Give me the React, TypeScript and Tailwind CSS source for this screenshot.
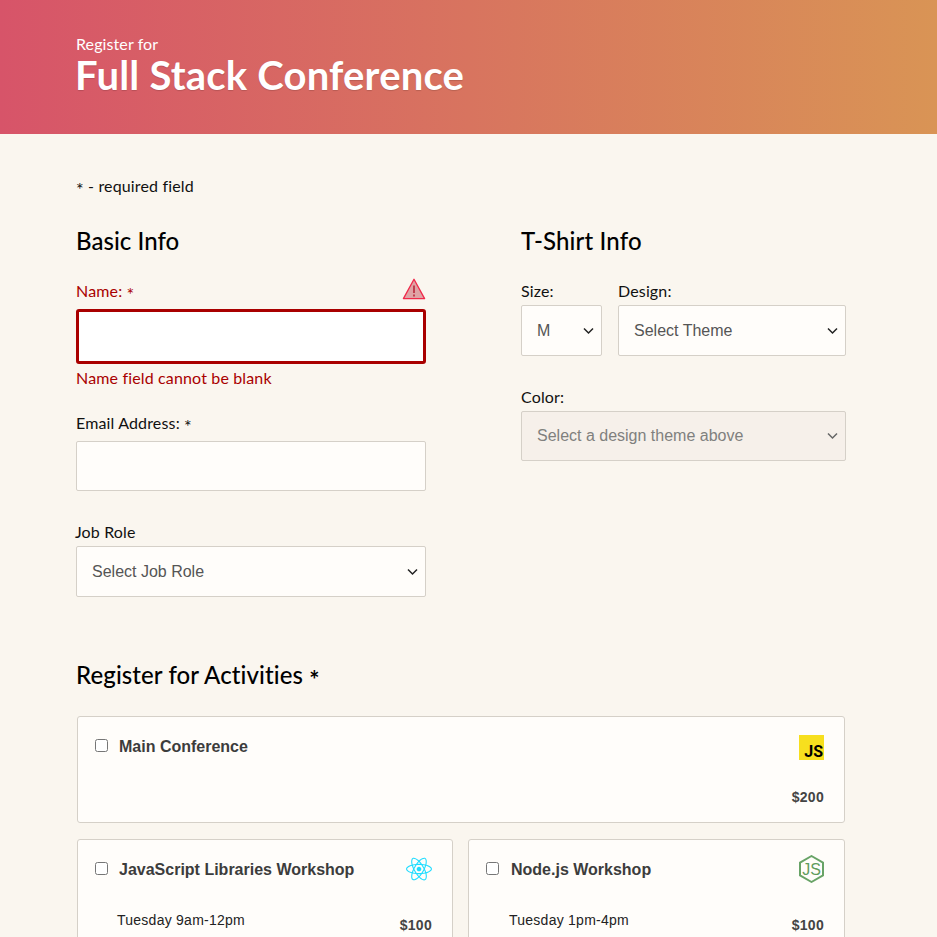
import React from "react";
import { FaReact } from "react-icons/fa";

const nunito = "font-['Lato','Noto_Sans',sans-serif]";

function Chevron({ muted }: { muted?: boolean }) {
  return (
    <svg
      className="absolute right-[8px] top-1/2 -translate-y-1/2 pointer-events-none"
      width="11"
      height="7"
      viewBox="0 0 11 7"
      fill="none"
      stroke={muted ? "#666" : "#222"}
      strokeWidth="1.5"
    >
      <path d="M1 1l4.5 4.5L10 1" />
    </svg>
  );
}

function Select({
  value,
  className,
  disabled,
}: {
  value: string;
  className: string;
  disabled?: boolean;
}) {
  return (
    <div className={`relative ${className}`}>
      <select
        disabled={disabled}
        className={`appearance-none opacity-100 w-full h-full border border-[#d5d0c8] rounded-[2px] pl-[15px] pr-6 text-[16px] font-['Liberation_Sans',sans-serif] ${
          disabled ? "bg-[#f6f0ea] text-[#80807e]" : "bg-[#fffdfa] text-[#555]"
        }`}
      >
        <option>{value}</option>
      </select>
      <Chevron muted={disabled} />
    </div>
  );
}

function Warning() {
  return (
    <svg width="24" height="24" viewBox="0 0 24 24" className="block">
      <path d="M12 2.2L22.6 21.6H1.4Z" fill="#dfa3a5" stroke="#f0294a" strokeWidth="1.3" strokeLinejoin="round" />
      <path d="M12 8.5v7.6" stroke="#b3152a" strokeWidth="1.4" />
      <path d="M12 17.6v1.8" stroke="#b3152a" strokeWidth="1.4" />
    </svg>
  );
}

function NodeIcon() {
  return (
    <svg width="25" height="28" viewBox="0 0 25 28" className="block -translate-y-px">
      <path d="M12.5 1L24 7.6V20.4L12.5 27L1 20.4V7.6Z" fill="none" stroke="#68a366" strokeWidth="2" strokeLinejoin="round" />
      <text x="12.5" y="19.5" textAnchor="middle" fontFamily="Liberation Sans, sans-serif" fontSize="16" fill="#5f9c5d">
        JS
      </text>
    </svg>
  );
}

function Star() {
  return <span className="inline-block translate-y-[4px] text-[18px] leading-none">*</span>;
}

function ActivityCard({
  title,
  time,
  price,
  icon,
  className,
  titleClass,
  timeClass,
}: {
  title: string;
  time: string;
  price: string;
  icon: React.ReactNode;
  className?: string;
  titleClass: string;
  timeClass: string;
}) {
  return (
    <div className={`h-[130px] bg-[#fffdfa] border border-[#d5d0c8] rounded-[3px] pl-[17px] pr-[20px] pt-[14px] ${className ?? ""}`}>
      <div className="flex items-center justify-between h-[32px]">
        <label className="flex items-center">
          <input type="checkbox" className="w-[13px] h-[13px] m-0 -translate-y-[2px]" />
          <span className={`${titleClass} text-[16px] font-bold text-[#3c3c3c]`}>{title}</span>
        </label>
        {icon}
      </div>
      <div className={`flex justify-between mt-[22px] ${timeClass}`}>
        <span className="text-[14px] text-[#222] leading-[24px] tracking-[0.25px]">{time}</span>
        <span className="text-[14px] font-bold text-[#444] leading-[24px] mt-[5px] tracking-[0.3px]">{price}</span>
      </div>
    </div>
  );
}

const labelText = "text-[16px] leading-[20px] tracking-[0.15px]";

export default function App() {
  return (
    <div className="h-[937px] overflow-hidden bg-[#faf6ef] font-['Liberation_Sans',sans-serif]">
      <header className="h-[134px] bg-linear-to-r/srgb from-[#d75469] to-[#d99455] pl-[76px] pt-[35px] text-white">
        <p className={`${nunito} text-[16px] leading-[18px] tracking-[0.1px]`}>Register for</p>
        <h1 className={`${nunito} -ml-px text-[40px] leading-[44px] font-bold tracking-[0.2px] [text-shadow:0_1px_1px_rgba(0,0,0,0.15)]`}>
          Full Stack Conference
        </h1>
      </header>

      <main className={`px-[76px] w-[922px] ${nunito}`}>
        <p className={`mt-[42px] ${labelText} text-[#111]`}>
          <Star /> - required field
        </p>

        <div className="flex justify-between mt-[30px]">
          <section className="w-[350px]">
            <h2 className="text-[24px] leading-[30px] font-medium text-black tracking-[0.05px]">Basic Info</h2>

            <div className="flex justify-between items-start mt-[21px] h-[24px] text-[#a90000]">
              <label className={`mt-[4px] ${labelText}`}>
                Name: <Star />
              </label>
              <Warning />
            </div>
            <input className="block mt-[8px] w-full h-[55px] bg-white border-[3px] border-[#a90000] rounded-[3px]" />
            <p className={`mt-[4px] ${labelText} text-[#a90000]`}>Name field cannot be blank</p>

            <label className={`block mt-[25px] ${labelText} text-[#111]`}>
              Email Address: <Star />
            </label>
            <input className="block mt-[8px] w-full h-[50px] bg-[#fffdfa] border border-[#d5d0c8] rounded-[2px]" />

            <label className={`block mt-[31px] -ml-px ${labelText} text-[#111]`}>Job Role</label>
            <Select value="Select Job Role" className="mt-[4px] h-[51px]" />
          </section>

          <section className="w-[325px]">
            <h2 className="text-[24px] leading-[30px] font-medium text-black tracking-[0.15px]">T-Shirt Info</h2>
            <div className="flex gap-[16px] mt-[25px]">
              <div className="w-[81px]">
                <label className={`block ${labelText} text-[#111]`}>Size:</label>
                <Select value="M" className="mt-[4px] h-[51px]" />
              </div>
              <div className="flex-1">
                <label className={`block ${labelText} text-[#111]`}>Design:</label>
                <Select value="Select Theme" className="mt-[4px] h-[51px]" />
              </div>
            </div>
            <label className={`block mt-[31px] ${labelText} text-[#111]`}>Color:</label>
            <Select value="Select a design theme above" className="mt-[4px] h-[50px]" disabled />
          </section>
        </div>

        <h2 className="mt-[63px] text-[24px] leading-[30px] font-medium text-black tracking-[0.1px]">
          Register for Activities <span className="inline-block translate-y-[5px] font-bold leading-none">*</span>
        </h2>

        <div className="ml-px w-[768px] mt-[26px] flex flex-col gap-[16px]">
          <div className="h-[107px] bg-[#fffdfa] border border-[#d5d0c8] rounded-[3px] pl-[17px] pr-[20px] pt-[14px] font-['Liberation_Sans',sans-serif]">
            <div className="flex items-start justify-between">
              <label className="flex items-center h-[32px]">
                <input type="checkbox" className="w-[13px] h-[13px] m-0 -translate-y-[2px]" />
                <span className="ml-[11px] text-[16px] font-bold text-[#3c3c3c]">Main Conference</span>
              </label>
              <div className="w-[25px] h-[25px] mt-[4px] bg-[#f7df1e] flex items-end justify-end pr-px">
                <span className="font-['Roboto',sans-serif] text-[16px] leading-[16px] font-bold text-black">JS</span>
              </div>
            </div>
            <p className="text-right text-[14px] font-bold text-[#444] leading-[20px] mt-[24px] tracking-[0.3px]">$200</p>
          </div>

          <div className="flex justify-between font-['Liberation_Sans',sans-serif]">
            <ActivityCard
              className="w-[376px]"
              titleClass="ml-[11px]"
              timeClass="pl-[22px]"
              title="JavaScript Libraries Workshop"
              time="Tuesday 9am-12pm"
              price="$100"
              icon={<FaReact size={26} color="#1fdcff" className="-translate-y-px" />}
            />
            <ActivityCard
              className="w-[377px]"
              titleClass="ml-[12px]"
              timeClass="pl-[23px]"
              title="Node.js Workshop"
              time="Tuesday 1pm-4pm"
              price="$100"
              icon={<NodeIcon />}
            />
          </div>
        </div>
      </main>
    </div>
  );
}
